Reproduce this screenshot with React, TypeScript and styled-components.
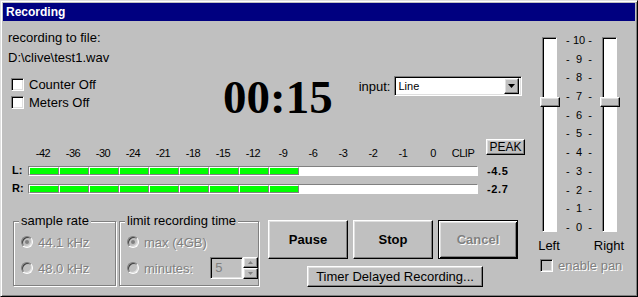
import { Fragment } from 'react';
import styled, { createGlobalStyle, css } from 'styled-components';

const GlobalStyle = createGlobalStyle`
  html, body {
    margin: 0;
    padding: 0;
    background: #c0c0c0;
  }
  body {
    font-family: 'Liberation Sans', Arial, sans-serif;
    font-size: 13px;
    color: #000;
  }
  * {
    box-sizing: border-box;
  }
`;

const raised = css`
  border: 1px solid;
  border-color: #fff #000 #000 #fff;
  box-shadow: inset -1px -1px #808080, inset 1px 1px #dfdfdf;
  background: #c0c0c0;
`;

const sunken = css`
  border: 1px solid;
  border-color: #808080 #fff #fff #808080;
  box-shadow: inset 1px 1px #000, inset -1px -1px #dfdfdf;
`;

const disabledText = css`
  color: #808080;
  text-shadow: 1px 1px 0 #fff;
`;

const Window = styled.div`
  width: 638px;
  height: 297px;
  padding: 2px;
  border: 1px solid;
  border-color: #dfdfdf #000 #000 #dfdfdf;
  box-shadow: inset 1px 1px #fff, inset -1px -1px #808080;
  background: #c0c0c0;
  display: flex;
  flex-direction: column;
`;

const TitleBar = styled.div`
  height: 18px;
  flex-shrink: 0;
  background: #000080;
  color: #fff;
  font-weight: 700;
  font-size: 12px;
  line-height: 18px;
  padding-left: 3px;
`;

const Body = styled.div`
  flex: 1;
  display: flex;
`;

const Main = styled.div`
  width: 527px;
  display: flex;
  flex-direction: column;
`;

const TopRow = styled.div`
  height: 100px;
  display: flex;
  align-items: flex-start;
`;

const FileInfo = styled.div`
  width: 220px;
  padding: 7px 0 0 5px;
`;

const Line = styled.div`
  line-height: 20px;
  white-space: nowrap;
`;

const Checks = styled.div`
  margin-top: 7px;
`;

const CheckRow = styled.label<{ $disabled?: boolean }>`
  height: 18px;
  display: flex;
  align-items: center;
  gap: 5px;
  padding-left: 3px;
  white-space: nowrap;
  ${(p) => p.$disabled && disabledText}
`;

const CheckBox = styled.span<{ $disabled?: boolean }>`
  width: 13px;
  height: 13px;
  flex-shrink: 0;
  ${sunken}
  background: ${(p) => (p.$disabled ? '#c0c0c0' : '#fff')};
`;

const Counter = styled.div`
  margin-top: 53px;
  font-family: 'Liberation Serif', 'Times New Roman', serif;
  font-weight: 700;
  font-size: 47px;
  line-height: 47px;
  white-space: nowrap;
`;

const InputGroup = styled.div`
  margin: 55px 0 0 26px;
  height: 20px;
  display: flex;
  align-items: center;
  gap: 4px;
`;

const Select = styled.div`
  width: 128px;
  height: 20px;
  ${sunken}
  background: #fff;
  display: flex;
  align-items: center;
  padding: 2px;
  font-size: 11px;
`;

const SelectText = styled.span`
  padding-left: 1px;
`;

const DropButton = styled.span`
  margin-left: auto;
  width: 15px;
  height: 16px;
  ${raised}
  display: flex;
  align-items: center;
  justify-content: center;
`;

const Meters = styled.div`
  margin-top: 18px;
  padding-left: 5px;
  display: grid;
  grid-template-columns: 20px 450px 1fr;
  grid-template-rows: 23px 18px 18px;
`;

const Scale = styled.div`
  display: flex;
  align-items: flex-end;
`;

const ScaleMark = styled.span`
  width: 30px;
  text-align: center;
  font-size: 11px;
  line-height: 13px;
  letter-spacing: -0.5px;
  padding-bottom: 2px;
  white-space: nowrap;
`;

const PeakButton = styled.div`
  align-self: start;
  margin-left: 8px;
  width: 39px;
  height: 16px;
  ${raised}
  font-size: 12px;
  line-height: 14px;
  text-align: center;
`;

const ChannelLabel = styled.div`
  display: flex;
  align-items: center;
  padding: 0 0 3px 4px;
  font-weight: 700;
  font-size: 11px;
`;

const MeterBar = styled.div`
  align-self: center;
  height: 10px;
  border: 1px solid;
  border-color: #808080 #fff #fff #808080;
  background: #fff;
  display: flex;
`;

const Segment = styled.span`
  width: 30px;
  height: 100%;
  border: 1px solid;
  border-color: #fff #808080 #808080 #fff;
  background: #00ff00;
`;

const Value = styled.div`
  align-self: center;
  padding-left: 9px;
  font-weight: 700;
  font-size: 11px;
  letter-spacing: 0.6px;
`;

const BottomRow = styled.div`
  margin-top: 15px;
  padding-left: 10px;
  display: flex;
  align-items: flex-start;
  gap: 3px;
`;

const GroupBox = styled.div<{ $width: number }>`
  margin-top: 8px;
  width: ${(p) => p.$width}px;
  height: 65px;
  border: 1px solid #808080;
  box-shadow: 1px 1px 0 #fff, inset 1px 1px 0 #fff;
  padding-left: 7px;
  display: flex;
  flex-direction: column;
`;

const Legend = styled.span`
  align-self: flex-start;
  margin: -9px 0 0 -2px;
  padding: 0 2px;
  background: #c0c0c0;
  line-height: 16px;
  white-space: nowrap;
`;

const OptionRow = styled.div<{ $first?: boolean }>`
  margin-top: ${(p) => (p.$first ? 3 : 6)}px;
  height: 20px;
  display: flex;
  align-items: center;
  gap: 5px;
  white-space: nowrap;
`;

const OptionText = styled.span`
  ${disabledText}
`;

const Radio = styled.span<{ $checked?: boolean }>`
  width: 12px;
  height: 12px;
  flex-shrink: 0;
  border-radius: 50%;
  border: 1px solid;
  border-color: #808080 #fff #fff #808080;
  box-shadow: inset 1px 1px #404040, inset -1px -1px #dfdfdf;
  background: #c0c0c0;
  display: flex;
  align-items: center;
  justify-content: center;

  &::after {
    content: '';
    width: 4px;
    height: 4px;
    border-radius: 50%;
    background: ${(p) => (p.$checked ? '#808080' : 'transparent')};
  }
`;

const SpinBox = styled.div`
  margin-left: 12px;
  height: 22px;
  display: flex;
`;

const SpinField = styled.div`
  width: 33px;
  height: 22px;
  ${sunken}
  background: #c0c0c0;
  color: #808080;
  padding-left: 4px;
  line-height: 20px;
`;

const SpinButtons = styled.div`
  width: 15px;
  display: flex;
  flex-direction: column;
`;

const SpinButton = styled.span`
  height: 11px;
  ${raised}
  display: flex;
  align-items: center;
  justify-content: center;
`;

const Actions = styled.div`
  margin: 7px 0 0 6px;
  display: flex;
  flex-direction: column;
`;

const ButtonRow = styled.div`
  display: flex;
  gap: 5px;
`;

const PushButton = styled.div<{ $default?: boolean; $disabled?: boolean }>`
  width: 80px;
  height: 39px;
  ${raised}
  display: flex;
  align-items: center;
  justify-content: center;
  font-weight: 700;
  font-size: 13px;
  ${(p) =>
    p.$default &&
    css`
      border-color: #000;
      box-shadow: inset 1px 1px #fff, inset -1px -1px #000, inset 2px 2px #dfdfdf, inset -2px -2px #808080;
    `}
  ${(p) => p.$disabled && disabledText}
`;

const TimerButton = styled.div`
  margin: 7px 0 0 39px;
  width: 176px;
  height: 21px;
  ${raised}
  text-align: center;
  line-height: 19px;
  white-space: nowrap;
`;

const Faders = styled.div`
  flex: 1;
  padding: 16px 0 0 9px;
  display: flex;
  flex-direction: column;
`;

const FaderRow = styled.div`
  display: flex;
`;

const FaderCol = styled.div`
  width: 20px;
  display: flex;
  flex-direction: column;
  align-items: center;
`;

const Track = styled.div`
  position: relative;
  width: 15px;
  height: 195px;
  border: 1px solid;
  border-color: #808080 #fff #fff #808080;
  box-shadow: inset 1px 1px #000;
  background: #fff;
`;

const Thumb = styled.div`
  position: absolute;
  left: -3px;
  top: 59px;
  width: 20px;
  height: 10px;
  ${raised}
`;

const FaderLabel = styled.div`
  margin-top: 6px;
  line-height: 16px;
  white-space: nowrap;
`;

const FaderScale = styled.div`
  width: 40px;
  height: 200px;
  margin-top: -3px;
  display: flex;
  flex-direction: column;
  justify-content: space-between;
  align-items: center;
`;

const FaderTick = styled.div`
  width: 26px;
  display: flex;
  justify-content: space-between;
  font-size: 11px;
  line-height: 13px;
`;

const EnableRow = styled(CheckRow)`
  margin-top: 3px;
  height: 16px;
  padding-left: 1px;
`;

const Triangle = ({ w, h, up, color = '#000' }: { w: number; h: number; up?: boolean; color?: string }) => (
  <svg width={w} height={h} viewBox={`0 0 ${w} ${h}`}>
    <path d={up ? `M0 ${h}h${w}L${w / 2} 0z` : `M0 0h${w}L${w / 2} ${h}z`} fill={color} />
  </svg>
);

const scaleMarks = ['-42', '-36', '-30', '-24', '-21', '-18', '-15', '-12', '-9', '-6', '-3', '-2', '-1', '0', 'CLIP'];
const channels = [
  { name: 'L:', lit: 9, value: '-4.5' },
  { name: 'R:', lit: 9, value: '-2.7' },
];
const faderTicks = ['10', '9', '8', '7', '6', '5', '4', '3', '2', '1', '0'];

const Fader = ({ label }: { label: string }) => (
  <FaderCol>
    <Track>
      <Thumb />
    </Track>
    <FaderLabel>{label}</FaderLabel>
  </FaderCol>
);

export default function App() {
  return (
    <>
      <GlobalStyle />
      <Window>
        <TitleBar>Recording</TitleBar>
        <Body>
          <Main>
            <TopRow>
              <FileInfo>
                <Line>recording to file:</Line>
                <Line>D:\clive\test1.wav</Line>
                <Checks>
                  <CheckRow>
                    <CheckBox />
                    Counter Off
                  </CheckRow>
                  <CheckRow>
                    <CheckBox />
                    Meters Off
                  </CheckRow>
                </Checks>
              </FileInfo>
              <Counter>00:15</Counter>
              <InputGroup>
                input:
                <Select>
                  <SelectText>Line</SelectText>
                  <DropButton>
                    <Triangle w={7} h={4} />
                  </DropButton>
                </Select>
              </InputGroup>
            </TopRow>

            <Meters>
              <div />
              <Scale>
                {scaleMarks.map((m) => (
                  <ScaleMark key={m}>{m}</ScaleMark>
                ))}
              </Scale>
              <PeakButton>PEAK</PeakButton>
              {channels.map((c) => (
                <Fragment key={c.name}>
                  <ChannelLabel>{c.name}</ChannelLabel>
                  <MeterBar>
                    {Array.from({ length: c.lit }).map((_, i) => (
                      <Segment key={i} />
                    ))}
                  </MeterBar>
                  <Value>{c.value}</Value>
                </Fragment>
              ))}
            </Meters>

            <BottomRow>
              <GroupBox $width={103}>
                <Legend>sample rate</Legend>
                <OptionRow $first>
                  <Radio $checked />
                  <OptionText>44.1 kHz</OptionText>
                </OptionRow>
                <OptionRow>
                  <Radio />
                  <OptionText>48.0 kHz</OptionText>
                </OptionRow>
              </GroupBox>
              <GroupBox $width={140}>
                <Legend>limit recording time</Legend>
                <OptionRow $first>
                  <Radio $checked />
                  <OptionText>max (4GB)</OptionText>
                </OptionRow>
                <OptionRow>
                  <Radio />
                  <OptionText>minutes:</OptionText>
                  <SpinBox>
                    <SpinField>5</SpinField>
                    <SpinButtons>
                      <SpinButton>
                        <Triangle w={5} h={3} up color="#808080" />
                      </SpinButton>
                      <SpinButton>
                        <Triangle w={5} h={3} color="#808080" />
                      </SpinButton>
                    </SpinButtons>
                  </SpinBox>
                </OptionRow>
              </GroupBox>
              <Actions>
                <ButtonRow>
                  <PushButton>Pause</PushButton>
                  <PushButton>Stop</PushButton>
                  <PushButton $default $disabled>
                    Cancel
                  </PushButton>
                </ButtonRow>
                <TimerButton>Timer Delayed Recording...</TimerButton>
              </Actions>
            </BottomRow>
          </Main>

          <Faders>
            <FaderRow>
              <Fader label="Left" />
              <FaderScale>
                {faderTicks.map((t) => (
                  <FaderTick key={t}>
                    <span>-</span>
                    <span>{t}</span>
                    <span>-</span>
                  </FaderTick>
                ))}
              </FaderScale>
              <Fader label="Right" />
            </FaderRow>
            <EnableRow $disabled>
              <CheckBox $disabled />
              enable pan
            </EnableRow>
          </Faders>
        </Body>
      </Window>
    </>
  );
}
